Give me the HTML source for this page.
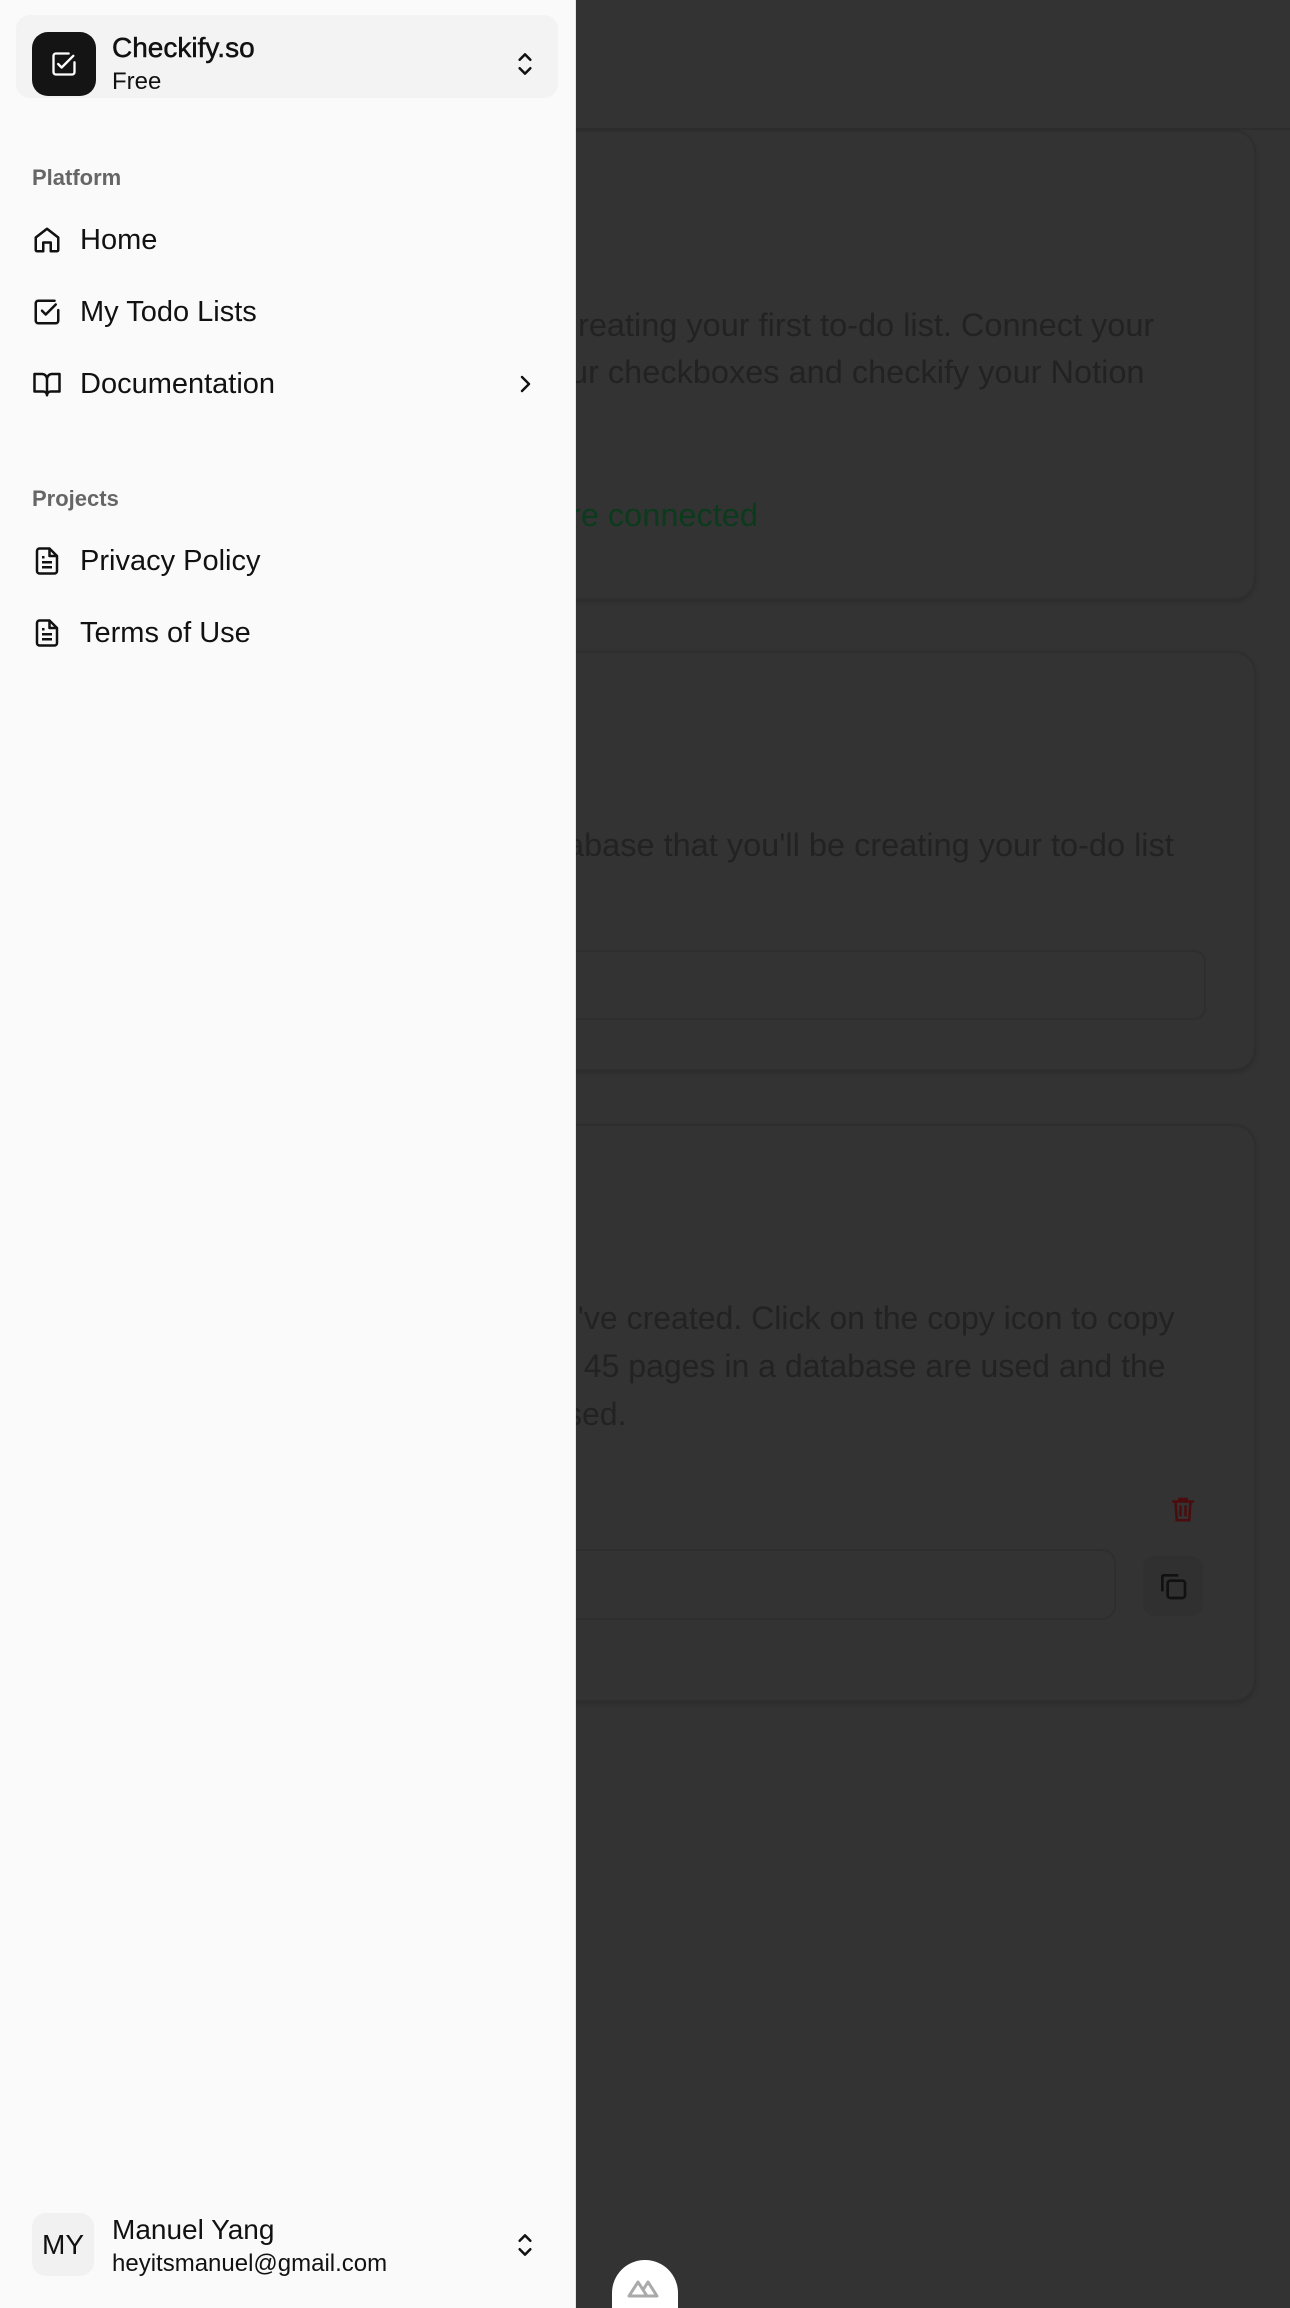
<!DOCTYPE html>
<html style="overflow:hidden;height:2308px"><head><meta charset="utf-8"><style>
*{box-sizing:border-box;margin:0;padding:0}
body{width:1290px;height:2308px;position:relative;overflow:hidden;background:#333;font-family:"Liberation Sans",sans-serif}
.a{position:absolute}
.card{position:absolute;left:470px;width:786px;border:2px solid #2e2e2e;border-radius:22px;background:#333;box-shadow:0 2px 4px rgba(0,0,0,.15)}
.t{position:absolute;color:#222;font-size:32.5px;white-space:nowrap}
.side{position:absolute;left:0;top:0;width:576px;height:2308px;background:#fafafa;border-right:1px solid #e5e5e5;z-index:5}
.nav{position:absolute;left:32px;font-size:29px;color:#111;display:flex;align-items:center;height:40px}
.nav svg{width:30px;height:30px;margin-right:18px}
.lbl{position:absolute;left:32px;font-size:22px;color:#666;font-weight:bold}
</style></head><body>
<div class="a" style="left:576px;top:128px;width:714px;height:2px;background:#2d2d2d"></div>
<div class="card" style="top:130px;height:470px"></div>
<div class="card" style="top:651px;height:420px"></div>
<div class="card" style="top:1124px;height:578px"></div>
<div class="t" style="left:578px;top:307px">reating your first to-do list. Connect your</div>
<div class="t" style="left:570px;top:354px">ur checkboxes and checkify your Notion</div>
<div class="t" style="left:570px;top:497px;color:#0b3b1c">re connected</div>
<div class="t" style="left:566px;top:827px">abase that you'll be creating your to-do list</div>
<div class="a" style="left:470px;top:950px;width:736px;height:70px;border:2px solid #2e2e2e;border-radius:12px"></div>
<div class="t" style="left:560px;top:1300px;font-size:32px">u've created. Click on the copy icon to copy</div>
<div class="t" style="left:566px;top:1348px;font-size:32px">t 45 pages in a database are used and the</div>
<div class="t" style="left:566px;top:1396px;font-size:32px">sed.</div>
<svg class="a" style="left:1168px;top:1494px" width="30" height="30" viewBox="0 0 24 24" fill="none" stroke="#4a0c0c" stroke-width="2" stroke-linecap="round"><path d="M4 6h16M9 6V4h6v2M6 6l1 15h10l1-15M10 10v7M14 10v7"/></svg>
<div class="a" style="left:470px;top:1549px;width:646px;height:71px;border:2px solid #2e2e2e;border-radius:14px"></div>
<div class="a" style="left:1143px;top:1556px;width:60px;height:60px;border-radius:12px;background:#303030"></div>
<svg class="a" style="left:1157px;top:1570px" width="32" height="32" viewBox="0 0 24 24" fill="none" stroke="#111" stroke-width="2" stroke-linejoin="round"><rect x="8" y="8" width="13" height="13" rx="2"/><path d="M4 16V5a1 1 0 0 1 1-1h11"/></svg>
<div class="a" style="left:612px;top:2260px;width:66px;height:48px;border-radius:33px 33px 0 0;background:#fff"></div>
<svg class="a" style="left:627px;top:2276px" width="36" height="24" viewBox="0 0 36 24" fill="none" stroke="#aaa" stroke-width="3" stroke-linejoin="round"><path d="M2 20L11 6l9 14H2zM16 14l5-8 9 14H20"/></svg>

<div class="side">
 <div class="a" style="left:16px;top:15px;width:542px;height:83px;border-radius:14px;background:#f3f3f3"></div>
 <div class="a" style="left:32px;top:32px;width:64px;height:64px;border-radius:16px;background:#141414"></div>
 <svg class="a" style="left:50px;top:50px" width="28" height="28" viewBox="0 0 24 24" fill="none" stroke="#fff" stroke-width="2" stroke-linecap="round" stroke-linejoin="round"><path d="M21 10.5V19a2 2 0 0 1-2 2H5a2 2 0 0 1-2-2V5a2 2 0 0 1 2-2h11"/><path d="M9 11l3 3L22 4" transform="translate(-2 1)"/></svg>
 <div class="a" style="left:112px;top:32px;font-size:28px;color:#111;-webkit-text-stroke:0.5px #111">Checkify.so</div>
 <div class="a" style="left:112px;top:68px;font-size:24px;color:#111">Free</div>
 <svg class="a" style="left:512px;top:48px" width="26" height="32" viewBox="0 0 24 30" fill="none" stroke="#111" stroke-width="2.4" stroke-linecap="round" stroke-linejoin="round"><path d="M7 11l5-5 5 5M7 19l5 5 5-5"/></svg>

 <div class="lbl" style="top:165px">Platform</div>
 <div class="nav" style="top:220px"><svg viewBox="0 0 24 24" fill="none" stroke="#111" stroke-width="2" stroke-linejoin="round"><path d="M3 10l9-7 9 7v10a1 1 0 0 1-1 1h-5v-7H9v7H4a1 1 0 0 1-1-1z"/></svg>Home</div>
 <div class="nav" style="top:292px"><svg viewBox="0 0 24 24" fill="none" stroke="#111" stroke-width="2" stroke-linecap="round" stroke-linejoin="round"><path d="M21 10.5V19a2 2 0 0 1-2 2H5a2 2 0 0 1-2-2V5a2 2 0 0 1 2-2h13"/><path d="M8 11l3 3 8-8"/></svg>My Todo Lists</div>
 <div class="nav" style="top:364px"><svg viewBox="0 0 24 24" fill="none" stroke="#111" stroke-width="2" stroke-linejoin="round"><path d="M2 4h6a4 4 0 0 1 4 4v13a3 3 0 0 0-3-3H2zM22 4h-6a4 4 0 0 0-4 4v13a3 3 0 0 1 3-3h7z"/></svg>Documentation</div>
 <svg class="a" style="left:513px;top:371px" width="24" height="26" viewBox="0 0 24 24" fill="none" stroke="#111" stroke-width="2.4" stroke-linecap="round" stroke-linejoin="round"><path d="M9 5l7 7-7 7"/></svg>

 <div class="lbl" style="top:486px">Projects</div>
 <div class="nav" style="top:541px"><svg viewBox="0 0 24 24" fill="none" stroke="#111" stroke-width="2" stroke-linejoin="round"><path d="M14 2H6a2 2 0 0 0-2 2v16a2 2 0 0 0 2 2h12a2 2 0 0 0 2-2V8z"/><path d="M14 2v6h6M8 13h8M8 17h8M8 9h2"/></svg>Privacy Policy</div>
 <div class="nav" style="top:613px"><svg viewBox="0 0 24 24" fill="none" stroke="#111" stroke-width="2" stroke-linejoin="round"><path d="M14 2H6a2 2 0 0 0-2 2v16a2 2 0 0 0 2 2h12a2 2 0 0 0 2-2V8z"/><path d="M14 2v6h6M8 13h8M8 17h8M8 9h2"/></svg>Terms of Use</div>

 <div class="a" style="left:32px;top:2213px;width:62px;height:63px;border-radius:14px;background:#f1f1f1;font-size:28px;color:#111;text-align:center;line-height:63px">MY</div>
 <div class="a" style="left:112px;top:2214px;font-size:28px;color:#111">Manuel Yang</div>
 <div class="a" style="left:112px;top:2250px;font-size:24px;color:#111">heyitsmanuel@gmail.com</div>
 <svg class="a" style="left:512px;top:2229px" width="26" height="32" viewBox="0 0 24 30" fill="none" stroke="#111" stroke-width="2.4" stroke-linecap="round" stroke-linejoin="round"><path d="M7 11l5-5 5 5M7 19l5 5 5-5"/></svg>
</div>
</body></html>
